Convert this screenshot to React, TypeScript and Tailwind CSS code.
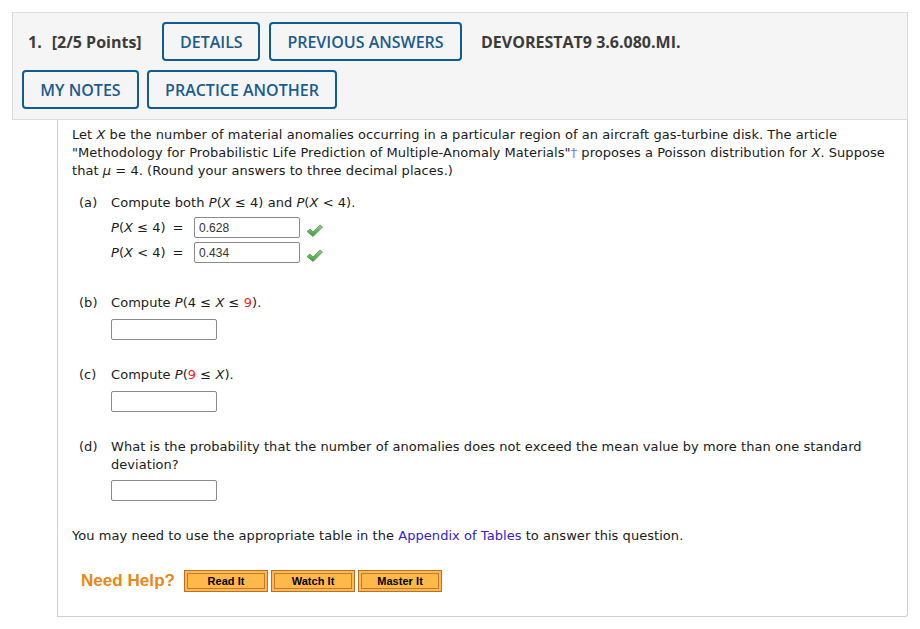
import React from "react";

const HeaderButton = ({ label, className = "" }: { label: string; className?: string }) => (
  <button
    className={`h-[39px] px-[16px] border-2 border-[#0d5d94] rounded-[4px] bg-[#f5f5f5] text-[16px] font-semibold text-[#1b5c8e] leading-none ${className}`}
    style={{ fontFamily: '"Open Sans", sans-serif' }}
  >
    {label}
  </button>
);

const AnswerBox = ({ value = "" }: { value?: string }) => (
  <div className="w-[106px] h-[21px] border border-[#8a8a8a] rounded-[2px] bg-white flex items-center px-[4px] text-[12px] text-[#333] font-['Liberation_Sans',sans-serif]">
    {value}
  </div>
);

const Check = () => (
  <svg width="17" height="14" viewBox="0 0 17 14" className="ml-[6px] mt-[6px]">
    <defs>
      <linearGradient id="chk" x1="0" y1="0" x2="0" y2="1">
        <stop offset="0" stopColor="#8fd18a" />
        <stop offset="1" stopColor="#3f9a3c" />
      </linearGradient>
    </defs>
    <path d="M1 7.5 L4 5 L7 8 L14 1 L16.5 3 L7 12.5 Z" fill="url(#chk)" stroke="#4a9a48" strokeWidth="0.8" strokeLinejoin="round" />
  </svg>
);

const HelpButton = ({ label }: { label: string }) => (
  <div className="w-[84px] h-[22px] border border-[#b8702c] bg-[#ffb84a] p-[2px]">
    <div className="h-full border border-[#c47a2c] flex items-center justify-center text-[11px] font-bold text-black font-['Liberation_Sans',Arial,sans-serif]">
      {label}
    </div>
  </div>
);

const I = ({ children }: { children: React.ReactNode }) => <i>{children}</i>;

export default function App() {
  return (
    <div className="min-h-[629px] bg-white pt-[12px] pl-[12px]">
      {/* header */}
      <div
        className="w-[896px] h-[108px] bg-[#f5f5f5] border border-[#dcdcdc] pt-[9px] pl-[9px]"
        style={{ fontFamily: '"Open Sans", sans-serif' }}
      >
        <div className="flex items-center">
          <div className="w-[140px] pl-[6px] text-[16px] font-bold text-[#3b3b3b]">
            1.<span className="ml-[10px]">[2/5 Points]</span>
          </div>
          <HeaderButton label="DETAILS" className="w-[98px]" />
          <HeaderButton label="PREVIOUS ANSWERS" className="w-[193px] ml-[9px]" />
          <div className="ml-[19px] text-[16px] font-bold text-[#3b3b3b]">DEVORESTAT9 3.6.080.MI.</div>
        </div>
        <div className="flex mt-[9px]">
          <HeaderButton label="MY NOTES" className="w-[117px]" />
          <HeaderButton label="PRACTICE ANOTHER" className="w-[190px] ml-[8px]" />
        </div>
      </div>

      {/* question body */}
      <div
        className="ml-[45px] w-[851px] border-x border-b border-[#cfcfcf] rounded-br-[3px] pt-[6px] pl-[14px] pb-[24px] text-[13px] leading-[18px] tracking-[0.05px] text-[#1a1a1a]"
        style={{ fontFamily: '"DejaVu Sans", Verdana, sans-serif' }}
      >
        <p>
          Let <I>X</I> be the number of material anomalies occurring in a particular region of an aircraft gas-turbine disk. The article
          <br />
          "Methodology for Probabilistic Life Prediction of Multiple-Anomaly Materials"
          <span className="text-[#6f7cff]">†</span> proposes a Poisson distribution for <I>X</I>. Suppose
          <br />
          that <I>μ</I> = 4. (Round your answers to three decimal places.)
        </p>

        <div className="mt-[14px] ml-[7px] flex">
          <span className="w-[32px]">(a)</span>
          <div>
            <div>
              Compute both <I>P</I>(<I>X</I> ≤ 4) and <I>P</I>(<I>X</I> &lt; 4).
            </div>
            <div className="mt-[3px] flex items-center h-[25px]">
              <span className="w-[60px]">
                <I>P</I>(<I>X</I> ≤ 4)
              </span>
              <span className="w-[14px] text-center">=</span>
              <span className="ml-[9px]">
                <AnswerBox value="0.628" />
              </span>
              <Check />
            </div>
            <div className="flex items-center h-[25px]">
              <span className="w-[60px]">
                <I>P</I>(<I>X</I> &lt; 4)
              </span>
              <span className="w-[14px] text-center">=</span>
              <span className="ml-[9px]">
                <AnswerBox value="0.434" />
              </span>
              <Check />
            </div>
          </div>
        </div>

        <div className="mt-[29px] ml-[7px] flex">
          <span className="w-[32px]">(b)</span>
          <div>
            <div>
              Compute <I>P</I>(4 ≤ <I>X</I> ≤ <span className="text-[#ff1a1a]">9</span>).
            </div>
            <div className="mt-[7px]">
              <AnswerBox />
            </div>
          </div>
        </div>

        <div className="mt-[26px] ml-[7px] flex">
          <span className="w-[32px]">(c)</span>
          <div>
            <div>
              Compute <I>P</I>(<span className="text-[#ff1a1a]">9</span> ≤ <I>X</I>).
            </div>
            <div className="mt-[7px]">
              <AnswerBox />
            </div>
          </div>
        </div>

        <div className="mt-[26px] ml-[7px] flex">
          <span className="w-[32px] shrink-0">(d)</span>
          <div>
            <div>
              What is the probability that the number of anomalies does not exceed the mean value by more than one standard
              <br />
              deviation?
            </div>
            <div className="mt-[6px]">
              <AnswerBox />
            </div>
          </div>
        </div>

        <p className="mt-[26px]">
          You may need to use the appropriate table in the <span className="text-[#3322cc]">Appendix of Tables</span> to answer
          this question.
        </p>

        <div className="mt-[25px] ml-[9px] flex items-center gap-[3px]">
          <span className="text-[17px] font-bold text-[#ee8616] mr-[6px] font-['Liberation_Sans',Arial,sans-serif]">
            Need Help?
          </span>
          <HelpButton label="Read It" />
          <HelpButton label="Watch It" />
          <HelpButton label="Master It" />
        </div>
      </div>
    </div>
  );
}
